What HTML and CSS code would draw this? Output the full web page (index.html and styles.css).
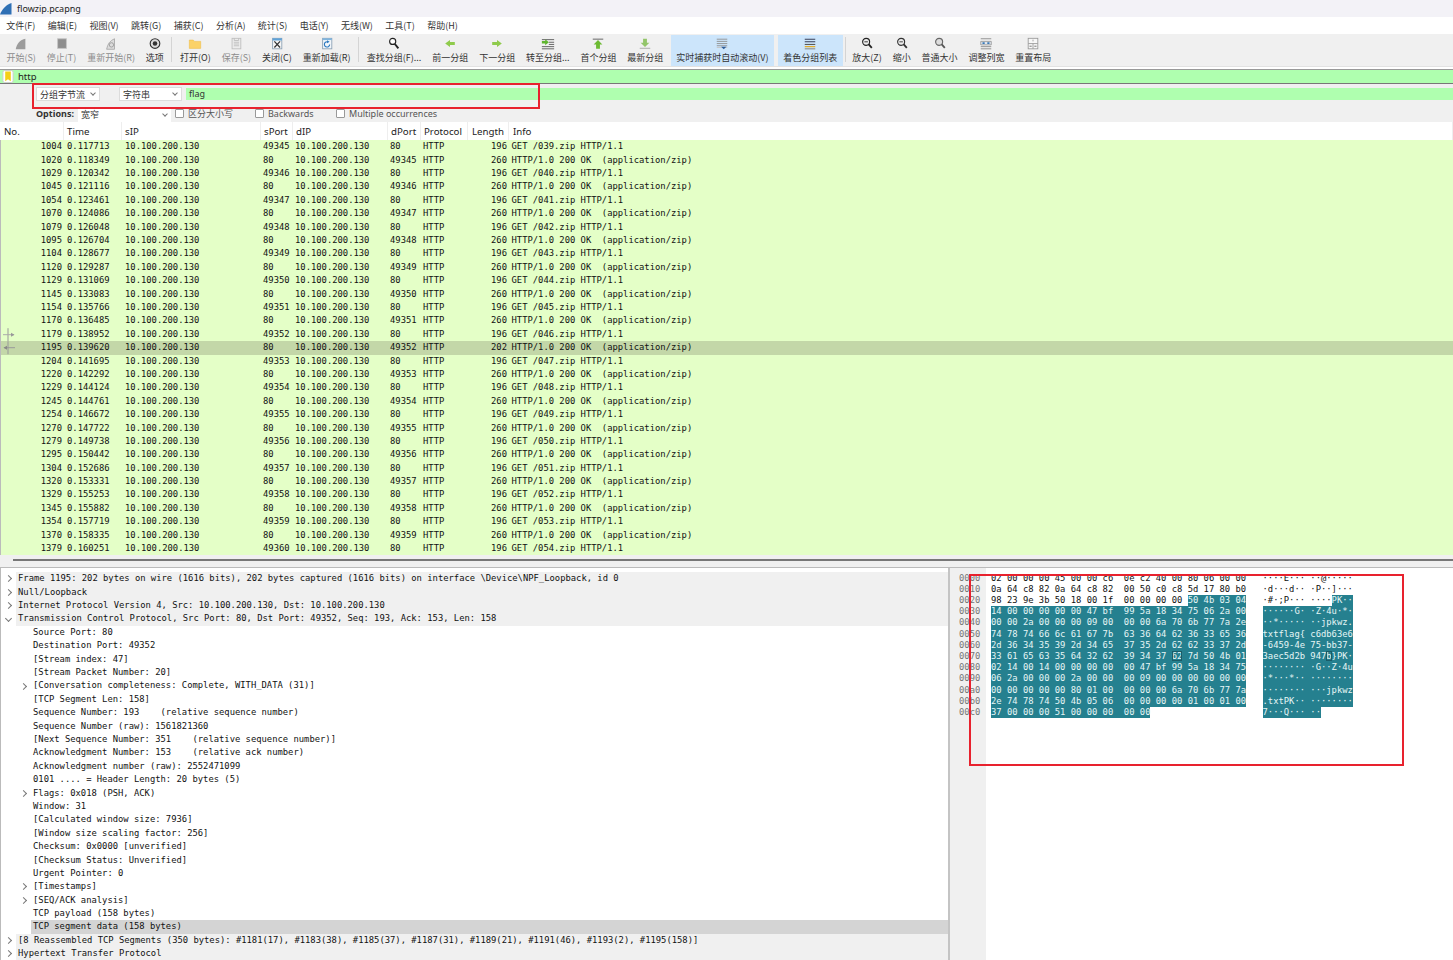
FILE: index.html
```html
<!DOCTYPE html>
<html lang="zh-CN">
<head>
    <meta charset="UTF-8">
    <title>flowzip.pcapng</title>
    <link rel="stylesheet" href="styles.css">
</head>
<body>
<div class="app">

    <div class="titlebar">
        <svg class="fin" viewBox="0 0 12 12"><path d="M0 11.500C2 6 6 2 11.500 0L11.500 11.500Z" fill="#2f6fb5"/></svg>
        <span>flowzip.pcapng</span>
    </div>

    <div class="menubar">
        <span>文件(F)</span><span>编辑(E)</span><span>视图(V)</span><span>跳转(G)</span><span>捕获(C)</span><span>分析(A)</span><span>统计(S)</span><span>电话(Y)</span><span>无线(W)</span><span>工具(T)</span><span>帮助(H)</span>
    </div>

    <div class="toolbar">
        <div class="tool off"><svg viewBox="0 0 16 16"><path d="M2 14C3 8 7 3 13 2L13 14Z" fill="#9c9c9c"/></svg><span>开始(S)</span></div>
        <div class="tool off"><svg viewBox="0 0 16 16"><rect x="3" y="2" width="10" height="11" fill="#8e8e8e" stroke="#c4c4c4"/></svg><span>停止(T)</span></div>
        <div class="tool off"><svg viewBox="0 0 16 16"><path d="M3 14C4 8 7 4 12 2L12 14Z" fill="#dcdcdc" stroke="#a8a8a8"/><circle cx="8.500" cy="9" r="2.500" fill="none" stroke="#999"/></svg><span>重新开始(R)</span></div>
        <div class="tool"><svg viewBox="0 0 16 16"><circle cx="8" cy="7.500" r="5.500" fill="#ddd" stroke="#333" stroke-width="1.300"/><circle cx="8" cy="7.500" r="2.600" fill="#333"/></svg><span>选项</span></div>
        <div class="sep"></div>
        <div class="tool"><svg viewBox="0 0 16 16"><path d="M1.500 3.500H6L7.500 5H14.500V13H1.500Z" fill="#fbd268" stroke="#eeb93f" stroke-width=".6"/></svg><span>打开(O)</span></div>
        <div class="tool off"><svg viewBox="0 0 16 16"><rect x="3.500" y="1.500" width="10" height="12" fill="#ececec" stroke="#bdbdbd"/><path d="M5.500 6H11.500M5.500 8H11.500M5.500 10H11.500M6 1.500V4H11V1.500" stroke="#bdbdbd" fill="none"/></svg><span>保存(S)</span></div>
        <div class="tool"><svg viewBox="0 0 16 16"><rect x="3" y="1.500" width="10.500" height="12" fill="#f6f6f6" stroke="#8aa0b4"/><path d="M3 1.500H13.500V4H3Z" fill="#5ea2d8"/><path d="M5 5L11.500 12M11.500 5L5 12" stroke="#333" stroke-width="1.400"/></svg><span>关闭(C)</span></div>
        <div class="tool"><svg viewBox="0 0 16 16"><rect x="3" y="1.500" width="10.500" height="12" fill="#f2f6fa" stroke="#8aa0b4"/><path d="M3 1.500H13.500V3.500H3Z" fill="#7fb4de"/><path d="M11 8.500A3 3 0 1 1 8.500 5.500" fill="none" stroke="#2b78bf" stroke-width="1.300"/><path d="M8 3.800L11 5.500L8 7.200Z" fill="#2b78bf"/></svg><span>重新加载(R)</span></div>
        <div class="sep"></div>
        <div class="tool"><svg viewBox="0 0 16 16"><circle cx="6.500" cy="5" r="3.500" fill="#fff" stroke="#222" stroke-width="1.300"/><path d="M9 8L13 13" stroke="#222" stroke-width="2.200"/></svg><span>查找分组(F)...</span></div>
        <div class="tool"><svg viewBox="0 0 16 16"><path d="M2.500 7.500L8 3.500V5.800H13.500V9.200H8V11.500Z" fill="#8fcb4c"/></svg><span>前一分组</span></div>
        <div class="tool"><svg viewBox="0 0 16 16"><path d="M13.500 7.500L8 3.500V5.800H2.500V9.200H8V11.500Z" fill="#8fcb4c"/></svg><span>下一分组</span></div>
        <div class="tool"><svg viewBox="0 0 16 16"><path d="M1 3H15M9 6H15M9 8.500H15M1 11H15M1 13.500H15" stroke="#555" stroke-width="1"/><path d="M9 6L4.800 2.500V4.500H1V7.500H4.800V9.500Z" fill="#5fb52f"/></svg><span>转至分组...</span></div>
        <div class="tool"><svg viewBox="0 0 16 16"><path d="M2 2.500H14" stroke="#888" stroke-width="1.500"/><path d="M8 3.500L13 8.500H10.200V13.500H5.800V8.500H3Z" fill="#6dbb33"/></svg><span>首个分组</span></div>
        <div class="tool"><svg viewBox="0 0 16 16"><path d="M8 11.500L13 6.500H10.200V2H5.800V6.500H3Z" fill="#93c56a"/><path d="M2 13H14" stroke="#bbb" stroke-width="1.500"/></svg><span>最新分组</span></div>
        <div class="tool on"><svg viewBox="0 0 16 16"><path d="M2 2.500H14M2 5H14M2 7.500H14M2 10H14" stroke="#8d8d8d" stroke-width="1"/><path d="M2 12H14" stroke="#c4c4c4"/><path d="M7 11H13L10 14Z" fill="#2a5c9a"/></svg><span>实时捕获时自动滚动(V)</span></div>
        <div class="tool on"><svg viewBox="0 0 16 16"><path d="M2 2.500H14M2 5.500H14" stroke="#39405a" stroke-width="1.200"/><path d="M2 8.500H14" stroke="#555" stroke-width="1.200"/><path d="M2 11H14" stroke="#e2ad2d" stroke-width="1.500"/><path d="M2 13.500H14" stroke="#8a8a8a" stroke-width="1.200"/></svg><span>着色分组列表</span></div>
        <div class="sep sep-tight"></div>
        <div class="tool"><svg viewBox="0 0 16 16"><circle cx="7" cy="5.500" r="4" fill="#eee" stroke="#222" stroke-width="1.300"/><path d="M5 5.500H9" stroke="#222"/><path d="M10 8.500L13.500 12.500" stroke="#222" stroke-width="2"/></svg><span>放大(Z)</span></div>
        <div class="tool"><svg viewBox="0 0 16 16"><circle cx="7" cy="5.500" r="4" fill="#eee" stroke="#333" stroke-width="1.300"/><path d="M5 5.500H9" stroke="#333"/><path d="M10 8.500L13.500 12.500" stroke="#333" stroke-width="2"/></svg><span>缩小</span></div>
        <div class="tool"><svg viewBox="0 0 16 16"><circle cx="7" cy="5.500" r="4" fill="#ddd" stroke="#666" stroke-width="1.300"/><path d="M10 8.500L13.500 12.500" stroke="#555" stroke-width="2"/></svg><span>普通大小</span></div>
        <div class="tool"><svg viewBox="0 0 16 16"><path d="M2 2H14M2 11H14M2 13.500H14" stroke="#888"/><path d="M2 5H14V9H2Z" fill="#dfe6ee" stroke="#999"/><path d="M4 7H6.500M9.500 7H12" stroke="#3a78b5" stroke-width="2"/></svg><span>调整列宽</span></div>
        <div class="tool"><svg viewBox="0 0 16 16"><rect x="2.500" y="1.500" width="11" height="12" fill="#f7f7f7" stroke="#999"/><path d="M2.500 7.500H13.500M8 7.500V13.500M8 3V5" stroke="#999"/><path d="M4 10.500H6.500M9.500 10.500H12" stroke="#666"/></svg><span>重置布局</span></div>
    </div>

    <div class="filterbar">
        <svg class="mark" viewBox="0 0 12 14"><rect x=".5" y=".5" width="11" height="13" rx="2" fill="#fff" stroke="#ccc"/><path d="M3 1.500H9V12L6 10L3 12Z" fill="#f5cf16"/></svg>
        <span>http</span>
    </div>

    <div class="findbar">
        <div class="combo combo-a"><span>分组字节流</span><i class="caret"></i></div>
        <div class="combo combo-b"><span>字符串</span><i class="caret"></i></div>
        <div class="findtext">flag</div>
    </div>

    <div class="optbar">
        <b>Options:</b>
        <div class="combo combo-c"><span>宽窄</span><i class="caret"></i></div>
        <label class="check check-a"><i></i>区分大小写</label>
        <label class="check check-b"><i></i>Backwards</label>
        <label class="check check-c"><i></i>Multiple occurrences</label>
    </div>

    <div class="pkt head">
        <span class="no">No.</span><span>Time</span><span>sIP</span><span>sPort</span><span>dIP</span><span>dPort</span><span>Protocol</span><span class="len">Length</span><span>Info</span>
    </div>

    <div class="pktlist">
        <div class="pkt"><span class="no">1004</span><span>0.117713</span><span>10.100.200.130</span><span>49345</span><span>10.100.200.130</span><span>80</span><span>HTTP</span><span class="len">196</span><span>GET /039.zip HTTP/1.1</span></div>
        <div class="pkt"><span class="no">1020</span><span>0.118349</span><span>10.100.200.130</span><span>80</span><span>10.100.200.130</span><span>49345</span><span>HTTP</span><span class="len">260</span><span>HTTP/1.0 200 OK  (application/zip)</span></div>
        <div class="pkt"><span class="no">1029</span><span>0.120342</span><span>10.100.200.130</span><span>49346</span><span>10.100.200.130</span><span>80</span><span>HTTP</span><span class="len">196</span><span>GET /040.zip HTTP/1.1</span></div>
        <div class="pkt"><span class="no">1045</span><span>0.121116</span><span>10.100.200.130</span><span>80</span><span>10.100.200.130</span><span>49346</span><span>HTTP</span><span class="len">260</span><span>HTTP/1.0 200 OK  (application/zip)</span></div>
        <div class="pkt"><span class="no">1054</span><span>0.123461</span><span>10.100.200.130</span><span>49347</span><span>10.100.200.130</span><span>80</span><span>HTTP</span><span class="len">196</span><span>GET /041.zip HTTP/1.1</span></div>
        <div class="pkt"><span class="no">1070</span><span>0.124086</span><span>10.100.200.130</span><span>80</span><span>10.100.200.130</span><span>49347</span><span>HTTP</span><span class="len">260</span><span>HTTP/1.0 200 OK  (application/zip)</span></div>
        <div class="pkt"><span class="no">1079</span><span>0.126048</span><span>10.100.200.130</span><span>49348</span><span>10.100.200.130</span><span>80</span><span>HTTP</span><span class="len">196</span><span>GET /042.zip HTTP/1.1</span></div>
        <div class="pkt"><span class="no">1095</span><span>0.126704</span><span>10.100.200.130</span><span>80</span><span>10.100.200.130</span><span>49348</span><span>HTTP</span><span class="len">260</span><span>HTTP/1.0 200 OK  (application/zip)</span></div>
        <div class="pkt"><span class="no">1104</span><span>0.128677</span><span>10.100.200.130</span><span>49349</span><span>10.100.200.130</span><span>80</span><span>HTTP</span><span class="len">196</span><span>GET /043.zip HTTP/1.1</span></div>
        <div class="pkt"><span class="no">1120</span><span>0.129287</span><span>10.100.200.130</span><span>80</span><span>10.100.200.130</span><span>49349</span><span>HTTP</span><span class="len">260</span><span>HTTP/1.0 200 OK  (application/zip)</span></div>
        <div class="pkt"><span class="no">1129</span><span>0.131069</span><span>10.100.200.130</span><span>49350</span><span>10.100.200.130</span><span>80</span><span>HTTP</span><span class="len">196</span><span>GET /044.zip HTTP/1.1</span></div>
        <div class="pkt"><span class="no">1145</span><span>0.133083</span><span>10.100.200.130</span><span>80</span><span>10.100.200.130</span><span>49350</span><span>HTTP</span><span class="len">260</span><span>HTTP/1.0 200 OK  (application/zip)</span></div>
        <div class="pkt"><span class="no">1154</span><span>0.135766</span><span>10.100.200.130</span><span>49351</span><span>10.100.200.130</span><span>80</span><span>HTTP</span><span class="len">196</span><span>GET /045.zip HTTP/1.1</span></div>
        <div class="pkt"><span class="no">1170</span><span>0.136485</span><span>10.100.200.130</span><span>80</span><span>10.100.200.130</span><span>49351</span><span>HTTP</span><span class="len">260</span><span>HTTP/1.0 200 OK  (application/zip)</span></div>
        <div class="pkt"><span class="no"><svg class="rel" viewBox="0 0 12 13"><path d="M5 0V13" stroke="#999"/><path d="M0 6.500H11" stroke="#aaa"/><path d="M8 4.500L11.500 6.500L8 8.500Z" fill="#999"/></svg>1179</span><span>0.138952</span><span>10.100.200.130</span><span>49352</span><span>10.100.200.130</span><span>80</span><span>HTTP</span><span class="len">196</span><span>GET /046.zip HTTP/1.1</span></div>
        <div class="pkt picked"><span class="no"><svg class="rel" viewBox="0 0 12 13"><path d="M5 0V13" stroke="#999"/><path d="M1 6.500H12" stroke="#999"/><path d="M4 4.500L.5 6.500L4 8.500Z" fill="#888"/></svg>1195</span><span>0.139620</span><span>10.100.200.130</span><span>80</span><span>10.100.200.130</span><span>49352</span><span>HTTP</span><span class="len">202</span><span>HTTP/1.0 200 OK  (application/zip)</span></div>
        <div class="pkt"><span class="no">1204</span><span>0.141695</span><span>10.100.200.130</span><span>49353</span><span>10.100.200.130</span><span>80</span><span>HTTP</span><span class="len">196</span><span>GET /047.zip HTTP/1.1</span></div>
        <div class="pkt"><span class="no">1220</span><span>0.142292</span><span>10.100.200.130</span><span>80</span><span>10.100.200.130</span><span>49353</span><span>HTTP</span><span class="len">260</span><span>HTTP/1.0 200 OK  (application/zip)</span></div>
        <div class="pkt"><span class="no">1229</span><span>0.144124</span><span>10.100.200.130</span><span>49354</span><span>10.100.200.130</span><span>80</span><span>HTTP</span><span class="len">196</span><span>GET /048.zip HTTP/1.1</span></div>
        <div class="pkt"><span class="no">1245</span><span>0.144761</span><span>10.100.200.130</span><span>80</span><span>10.100.200.130</span><span>49354</span><span>HTTP</span><span class="len">260</span><span>HTTP/1.0 200 OK  (application/zip)</span></div>
        <div class="pkt"><span class="no">1254</span><span>0.146672</span><span>10.100.200.130</span><span>49355</span><span>10.100.200.130</span><span>80</span><span>HTTP</span><span class="len">196</span><span>GET /049.zip HTTP/1.1</span></div>
        <div class="pkt"><span class="no">1270</span><span>0.147722</span><span>10.100.200.130</span><span>80</span><span>10.100.200.130</span><span>49355</span><span>HTTP</span><span class="len">260</span><span>HTTP/1.0 200 OK  (application/zip)</span></div>
        <div class="pkt"><span class="no">1279</span><span>0.149738</span><span>10.100.200.130</span><span>49356</span><span>10.100.200.130</span><span>80</span><span>HTTP</span><span class="len">196</span><span>GET /050.zip HTTP/1.1</span></div>
        <div class="pkt"><span class="no">1295</span><span>0.150442</span><span>10.100.200.130</span><span>80</span><span>10.100.200.130</span><span>49356</span><span>HTTP</span><span class="len">260</span><span>HTTP/1.0 200 OK  (application/zip)</span></div>
        <div class="pkt"><span class="no">1304</span><span>0.152686</span><span>10.100.200.130</span><span>49357</span><span>10.100.200.130</span><span>80</span><span>HTTP</span><span class="len">196</span><span>GET /051.zip HTTP/1.1</span></div>
        <div class="pkt"><span class="no">1320</span><span>0.153331</span><span>10.100.200.130</span><span>80</span><span>10.100.200.130</span><span>49357</span><span>HTTP</span><span class="len">260</span><span>HTTP/1.0 200 OK  (application/zip)</span></div>
        <div class="pkt"><span class="no">1329</span><span>0.155253</span><span>10.100.200.130</span><span>49358</span><span>10.100.200.130</span><span>80</span><span>HTTP</span><span class="len">196</span><span>GET /052.zip HTTP/1.1</span></div>
        <div class="pkt"><span class="no">1345</span><span>0.155882</span><span>10.100.200.130</span><span>80</span><span>10.100.200.130</span><span>49358</span><span>HTTP</span><span class="len">260</span><span>HTTP/1.0 200 OK  (application/zip)</span></div>
        <div class="pkt"><span class="no">1354</span><span>0.157719</span><span>10.100.200.130</span><span>49359</span><span>10.100.200.130</span><span>80</span><span>HTTP</span><span class="len">196</span><span>GET /053.zip HTTP/1.1</span></div>
        <div class="pkt"><span class="no">1370</span><span>0.158335</span><span>10.100.200.130</span><span>80</span><span>10.100.200.130</span><span>49359</span><span>HTTP</span><span class="len">260</span><span>HTTP/1.0 200 OK  (application/zip)</span></div>
        <div class="pkt"><span class="no">1379</span><span>0.160251</span><span>10.100.200.130</span><span>49360</span><span>10.100.200.130</span><span>80</span><span>HTTP</span><span class="len">196</span><span>GET /054.zip HTTP/1.1</span></div>
    </div>

    <div class="hscroll"><div class="thumb"></div></div>

    <div class="panes">
        <div class="details">
            <div class="d top"><i class="tw"></i><span>Frame 1195: 202 bytes on wire (1616 bits), 202 bytes captured (1616 bits) on interface \Device\NPF_Loopback, id 0</span></div>
            <div class="d top"><i class="tw"></i><span>Null/Loopback</span></div>
            <div class="d top"><i class="tw"></i><span>Internet Protocol Version 4, Src: 10.100.200.130, Dst: 10.100.200.130</span></div>
            <div class="d top"><i class="tw open"></i><span>Transmission Control Protocol, Src Port: 80, Dst Port: 49352, Seq: 193, Ack: 153, Len: 158</span></div>
            <div class="d sub"><i></i><span>Source Port: 80</span></div>
            <div class="d sub"><i></i><span>Destination Port: 49352</span></div>
            <div class="d sub"><i></i><span>[Stream index: 47]</span></div>
            <div class="d sub"><i></i><span>[Stream Packet Number: 20]</span></div>
            <div class="d sub"><i class="tw"></i><span>[Conversation completeness: Complete, WITH_DATA (31)]</span></div>
            <div class="d sub"><i></i><span>[TCP Segment Len: 158]</span></div>
            <div class="d sub"><i></i><span>Sequence Number: 193    (relative sequence number)</span></div>
            <div class="d sub"><i></i><span>Sequence Number (raw): 1561821360</span></div>
            <div class="d sub"><i></i><span>[Next Sequence Number: 351    (relative sequence number)]</span></div>
            <div class="d sub"><i></i><span>Acknowledgment Number: 153    (relative ack number)</span></div>
            <div class="d sub"><i></i><span>Acknowledgment number (raw): 2552471099</span></div>
            <div class="d sub"><i></i><span>0101 .... = Header Length: 20 bytes (5)</span></div>
            <div class="d sub"><i class="tw"></i><span>Flags: 0x018 (PSH, ACK)</span></div>
            <div class="d sub"><i></i><span>Window: 31</span></div>
            <div class="d sub"><i></i><span>[Calculated window size: 7936]</span></div>
            <div class="d sub"><i></i><span>[Window size scaling factor: 256]</span></div>
            <div class="d sub"><i></i><span>Checksum: 0x0000 [unverified]</span></div>
            <div class="d sub"><i></i><span>[Checksum Status: Unverified]</span></div>
            <div class="d sub"><i></i><span>Urgent Pointer: 0</span></div>
            <div class="d sub"><i class="tw"></i><span>[Timestamps]</span></div>
            <div class="d sub"><i class="tw"></i><span>[SEQ/ACK analysis]</span></div>
            <div class="d sub"><i></i><span>TCP payload (158 bytes)</span></div>
            <div class="d sub cur"><i></i><span>TCP segment data (158 bytes)</span></div>
            <div class="d top"><i class="tw"></i><span>[8 Reassembled TCP Segments (350 bytes): #1181(17), #1183(38), #1185(37), #1187(31), #1189(21), #1191(46), #1193(2), #1195(158)]</span></div>
            <div class="d top"><i class="tw"></i><span>Hypertext Transfer Protocol</span></div>
        </div>

        <div class="hexpane">
<pre class="offs">0000
0010
0020
0030
0040
0050
0060
0070
0080
0090
00a0
00b0
00c0</pre>
<pre class="bytes">02 00 00 00 45 00 00 c6  0e c2 40 00 80 06 00 00
0a 64 c8 82 0a 64 c8 82  00 50 c0 c8 5d 17 80 b0
98 23 9e 3b 50 18 00 1f  00 00 00 00 <span class="sel">50 4b 03 04</span>
<span class="sel">14 00 00 00 00 00 47 bf  99 5a 18 34 75 06 2a 00</span>
<span class="sel">00 00 2a 00 00 00 09 00  00 00 6a 70 6b 77 7a 2e</span>
<span class="sel">74 78 74 66 6c 61 67 7b  63 36 64 62 36 33 65 36</span>
<span class="sel">2d 36 34 35 39 2d 34 65  37 35 2d 62 62 33 37 2d</span>
<span class="sel">33 61 65 63 35 64 32 62  39 34 37 <b class="hov">62</b> 7d 50 4b 01</span>
<span class="sel">02 14 00 14 00 00 00 00  00 47 bf 99 5a 18 34 75</span>
<span class="sel">06 2a 00 00 00 2a 00 00  00 09 00 00 00 00 00 00</span>
<span class="sel">00 00 00 00 00 80 01 00  00 00 00 6a 70 6b 77 7a</span>
<span class="sel">2e 74 78 74 50 4b 05 06  00 00 00 00 01 00 01 00</span>
<span class="sel">37 00 00 00 51 00 00 00  00 00</span></pre>
<pre class="ascii">····E··· ··@·····
·d···d·· ·P··]···
·#·;P··· ····<span class="sel">PK··</span>
<span class="sel">······G· ·Z·4u·*·</span>
<span class="sel">··*····· ··jpkwz.</span>
<span class="sel">txtflag{ c6db63e6</span>
<span class="sel">-6459-4e 75-bb37-</span>
<span class="sel">3aec5d2b 947<b class="hov">b</b>}PK·</span>
<span class="sel">········ ·G··Z·4u</span>
<span class="sel">·*···*·· ········</span>
<span class="sel">········ ···jpkwz</span>
<span class="sel">.txtPK·· ········</span>
<span class="sel">7···Q··· ··</span></pre>
        </div>
    </div>

    <!-- annotation boxes drawn over the capture -->
    <div class="redbox box-find"></div>
    <div class="redbox box-hex"></div>
</div>
</body>
</html>
```

FILE: styles.css
```css
* {
    box-sizing: border-box;
}

body {
    margin: 0;
    background-color: #ffffff;
}

.app {
    position: relative;
    display: flex;
    flex-direction: column;
    width: 1453px;
    height: 960px;
    overflow: hidden;
    font-family: "Noto Sans CJK SC", "Noto Sans", sans-serif;
    font-size: 9px;
    color: #333;
}

.titlebar {
    display: flex;
    align-items: center;
    gap: 5px;
    height: 17px;
    background-color: #f3f2f7;
    font-family: "Noto Sans", sans-serif;
    font-size: 9px;
    color: #222;
}

.fin {
    width: 12px;
    height: 12px;
}

.menubar {
    display: flex;
    align-items: center;
    height: 17px;
    background-color: #ffffff;
}

.menubar span {
    padding: 0 6.2px;
}

.toolbar {
    display: flex;
    height: 33px;
    padding-left: 1px;
    background-color: #f0f0f0;
    border-bottom: 1px solid #e2e2e2;
}

.tool {
    display: flex;
    flex-direction: column;
    align-items: center;
    padding: 3px 5.45px 0;
    white-space: nowrap;
    line-height: 13px;
}

.tool svg {
    width: 14px;
    height: 14px;
}

.tool.off {
    color: #8c8c8c;
}

.tool.on {
    margin: 1px 2px 0;
    padding-top: 2px;
    background-color: #cce5fb;
}

.sep {
    width: 1px;
    margin: 3px 2.2px 4px;
    background-color: #d4d4d4;
}

.sep-tight {
    margin: 3px 1px 4px 0;
}

.filterbar {
    display: flex;
    align-items: center;
    gap: 4px;
    height: 15px;
    margin-top: 2px;
    padding-left: 2px;
    background-color: #afffaf;
    border-top: 1px solid #999;
    border-bottom: 1px solid #777;
    font-family: "Noto Sans", sans-serif;
    font-size: 9.5px;
    color: #222;
}

.mark {
    width: 12px;
    height: 13px;
}

.findbar {
    display: flex;
    align-items: flex-start;
    height: 23px;
    padding: 3px 0 0 36px;
    background-color: #f0f0f0;
}

.combo {
    display: flex;
    align-items: center;
    justify-content: space-between;
    height: 14px;
    padding: 0 4px 0 3px;
    background-color: #ffffff;
    border: 1px solid #dcdcdc;
}

.combo-a {
    width: 64px;
}

.combo-b {
    width: 63px;
    margin-left: 19px;
}

.combo-c {
    width: 93px;
    height: 15px;
    margin: 0 0 -2px 3px;
    border: none;
}

.caret {
    width: 4px;
    height: 4px;
    border-right: 1px solid #777;
    border-bottom: 1px solid #777;
    transform: rotate(45deg);
    margin-top: -2px;
}

.findtext {
    flex: 1;
    height: 12px;
    margin: 1px 0 0 4px;
    padding-left: 3px;
    line-height: 12px;
    background-color: #afffaf;
    font-family: "Noto Sans", sans-serif;
}

.optbar {
    display: flex;
    align-items: center;
    height: 15px;
    padding: 0 0 2px 36px;
    background-color: #f0f0f0;
    font-family: "Noto Sans", "Noto Sans CJK SC", sans-serif;
}

.optbar b {
    width: 39px;
    white-space: nowrap;
}

.check {
    display: flex;
    align-items: center;
    gap: 4px;
    white-space: nowrap;
    color: #555;
}

.check i {
    width: 9px;
    height: 9px;
    background-color: #ffffff;
    border: 1px solid #999;
    border-radius: 1px;
}

.check-a {
    width: 80px;
    margin-left: 4px;
}

.check-b {
    width: 81px;
}

.pkt {
    position: relative;
    display: grid;
    grid-template-columns: 63px 58px 138px 32px 95px 33px 47px 42px 1fr;
    height: 13.4px;
    line-height: 13.4px;
    background-color: #e4ffc7;
    font-family: "DejaVu Sans Mono", monospace;
    font-size: 8.84px;
    color: #111;
    white-space: pre;
}

.pkt span {
    padding-left: 3px;
    overflow: hidden;
}

.pkt .no,
.pkt .len {
    padding-left: 0;
    padding-right: 2px;
    text-align: right;
}

.pkt .len + span {
    padding-left: 2.5px;
}

.pkt.picked {
    background-color: #c3d7a8;
}

.pkt.head {
    grid-template-columns: 64px 58px 139px 32px 95px 33px 47px 41px 1fr;
    height: 18px;
    line-height: 20px;
    background-color: #ffffff;
    font-family: "Noto Sans", sans-serif;
    font-size: 9.7px;
    color: #222;
}

.pkt.head span {
    border-right: 1px solid #eeeeee;
}

.pkt.head .no {
    padding-left: 4px;
    text-align: left;
}

.pkt.head .len {
    padding-left: 4px;
    text-align: left;
}

.pkt.head .len + span {
    padding-left: 4px;
}

.pktlist {
    height: 415px;
    padding-top: 0.3px;
    border-left: 1px solid #bbbbbb;
    overflow: hidden;
}

.rel {
    position: absolute;
    left: 2px;
    top: 0;
    width: 12px;
    height: 13.4px;
}

.hscroll {
    height: 13px;
    padding: 4px 0 0 13px;
    background-color: #f0f0f0;
    border-bottom: 1px solid #bbbbbb;
}

.thumb {
    height: 2px;
    background-color: #777777;
}

.panes {
    flex: 1;
    display: flex;
    min-height: 0;
}

.details {
    width: 950px;
    padding-top: 4.3px;
    border-left: 1px solid #bbbbbb;
    border-right: 2px solid #c4c4c4;
    font-family: "DejaVu Sans Mono", monospace;
    font-size: 8.84px;
    color: #111;
    overflow: hidden;
}

.d {
    display: flex;
    height: 13.4px;
    line-height: 13.4px;
}

.d i {
    flex: 0 0 15px;
    display: flex;
    align-items: center;
    justify-content: center;
}

.d span {
    flex: 1;
    padding-left: 2px;
    white-space: pre;
}

.d.sub {
    margin-left: 15px;
}

.d.top span {
    background-color: #f0f0f0;
}

.d.cur span {
    background-color: #d4d4d4;
}

.tw::before {
    content: "";
    width: 4px;
    height: 4px;
    margin-left: -1px;
    border-top: 1px solid #777;
    border-right: 1px solid #777;
    transform: rotate(45deg);
}

.tw.open::before {
    margin-left: 0;
    margin-top: -2px;
    transform: rotate(135deg);
}

.hexpane {
    flex: 1;
    display: flex;
    font-family: "DejaVu Sans Mono", monospace;
    font-size: 8.84px;
    color: #111;
}

.hexpane pre {
    margin: 0;
    padding-top: 4.8px;
    font: inherit;
    line-height: 11.17px;
}

.offs {
    width: 36px;
    padding-left: 9px;
    background-color: #f0f0f0;
    color: #777;
}

.bytes {
    width: 271.5px;
    margin-left: 5px !important;
}

.sel {
    display: inline-block;
    height: 11.17px;
    vertical-align: top;
    background-color: #25808f;
    color: #e6f6f6;
}

.hov {
    font-weight: normal;
    outline: 1px solid #1a5c68;
    outline-offset: -1px;
}

.redbox {
    position: absolute;
    border: 2px solid #e8222e;
    pointer-events: none;
}

.box-find {
    left: 32px;
    top: 83px;
    width: 508px;
    height: 26px;
}

.box-hex {
    left: 969px;
    top: 574px;
    width: 435px;
    height: 192px;
}
```
